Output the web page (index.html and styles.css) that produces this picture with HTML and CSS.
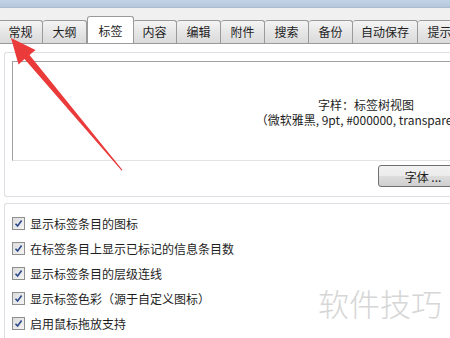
FILE: index.html
```html
<!DOCTYPE html>
<html lang="zh">
<head>
  <meta charset="UTF-8">
  <title>选项</title>
  <link rel="stylesheet" href="styles.css">
</head>
<body>
  <div class="window">
    <div class="titlebar"></div>
    <div class="tabs">
      <div class="tab first">常规</div>
      <div class="tab">大纲</div>
      <div class="tab active">标签</div>
      <div class="tab">内容</div>
      <div class="tab">编辑</div>
      <div class="tab">附件</div>
      <div class="tab">搜索</div>
      <div class="tab">备份</div>
      <div class="tab wide">自动保存</div>
      <div class="tab">提示</div>
    </div>

    <div class="panel">
      <!-- 字体预览 -->
      <div class="group font-group">
        <div class="preview">
          <p>字样：标签树视图</p>
          <p>（微软雅黑, 9pt, #000000, transparent）</p>
        </div>
        <div class="btn-row">
          <button class="btn">字体 ...</button>
        </div>
      </div>

      <!-- 选项 -->
      <div class="group options">
        <label class="check"><span class="box"><svg viewBox="0 0 9 9"><path d="M1.5 4.8 L3.6 7 L7.6 1.6" /></svg></span>显示标签条目的图标</label>
        <label class="check"><span class="box"><svg viewBox="0 0 9 9"><path d="M1.5 4.8 L3.6 7 L7.6 1.6" /></svg></span>在标签条目上显示已标记的信息条目数</label>
        <label class="check"><span class="box"><svg viewBox="0 0 9 9"><path d="M1.5 4.8 L3.6 7 L7.6 1.6" /></svg></span>显示标签条目的层级连线</label>
        <label class="check"><span class="box"><svg viewBox="0 0 9 9"><path d="M1.5 4.8 L3.6 7 L7.6 1.6" /></svg></span>显示标签色彩（源于自定义图标）</label>
        <label class="check"><span class="box"><svg viewBox="0 0 9 9"><path d="M1.5 4.8 L3.6 7 L7.6 1.6" /></svg></span>启用鼠标拖放支持</label>
      </div>
    </div>

    <div class="watermark">软件技巧</div>

    <svg class="arrow" width="450" height="338" viewBox="0 0 450 338">
      <polygon points="11,38 35.5,50 29.5,55 122.5,170 121.5,170.5 24.5,59 18.5,64.5" />
    </svg>
  </div>
</body>
</html>
```

FILE: styles.css
```css
/* 基本 */
body {
  margin: 0;
  padding: 0;
  overflow: hidden;
  font-family: "Noto Sans CJK SC", "Microsoft YaHei", sans-serif;
  font-size: 12px;
  color: #1e1e1e;
  background: #f0f0f0;
}
.window {
  position: relative;
  width: 450px;
  height: 338px;
  overflow: hidden;
}
/* 标题栏 */
.titlebar {
  height: 7px;
  background: linear-gradient(#c3d4e6, #b4c8dc);
  border-bottom: 1px solid #a9bbcd;
}
/* 标签页 */
.tabs {
  display: flex;
  align-items: flex-end;
  height: 35px;
  margin-left: -2px;
  white-space: nowrap;
}
.tab {
  flex: none;
  width: 43px;
  height: 22px;
  line-height: 22px;
  text-align: center;
  background: linear-gradient(#f4f4f4, #e6e6e6 50%, #dadada);
  border: 1px solid #9a9a9a;
  border-bottom: none;
  border-left: none;
  border-radius: 3px 3px 0 0;
}
.tab.first {
  width: 43px;
  border-left: 1px solid #9a9a9a;
}
.tab.active {
  width: 45px;
  height: 26px;
  line-height: 27px;
  background: #fff;
  border-left: 1px solid #9a9a9a;
  margin-right: -1px;
  position: relative;
  z-index: 1;
}
.tab.wide {
  width: 64px;
}
/* 内容 */
.panel {
  background: #fff;
  border-top: 1px solid #9a9a9a;
  padding: 8px 0 0 4px;
  height: 300px;
}
.group {
  border: 1px solid #dcdfe3;
  border-right: none;
  border-radius: 3px 0 0 3px;
  width: 600px;
}
.font-group {
  padding: 8px 0 8px 7px;
  height: 127px;
}
.preview {
  width: 708px;
  height: 100px;
  border: 1px solid #a0a0a0;
  border-right-color: #e3e3e3;
  border-bottom-color: #e3e3e3;
  box-sizing: border-box;
  padding-top: 35px;
  text-align: center;
  line-height: 15px;
}
.preview p {
  margin: 0;
}
.btn-row {
  padding: 4px 0 0 366px;
}
.btn {
  width: 90px;
  height: 22px;
  padding: 0;
  font-family: inherit;
  font-size: 12px;
  color: #1e1e1e;
  border: 1px solid #707070;
  border-radius: 3px;
  background: linear-gradient(#f2f2f2, #ebebeb 50%, #dddddd 51%, #cfcfcf);
}
.options {
  margin-top: 6px;
  padding: 7px 0 0 7px;
  height: 140px;
}
.check {
  display: flex;
  align-items: center;
  height: 25px;
  gap: 5px;
}
.box {
  width: 11px;
  height: 11px;
  border: 1px solid #8e8f8f;
  background: linear-gradient(135deg, #dcdcdc, #f4f4f4);
  display: flex;
  align-items: center;
  justify-content: center;
}
.box svg {
  width: 9px;
  height: 9px;
  fill: none;
  stroke: #2b4a8a;
  stroke-width: 1.6;
}
/* 水印 */
.watermark {
  position: absolute;
  left: 318px;
  top: 280px;
  font-size: 31px;
  font-weight: 300;
  white-space: nowrap;
  color: #d6d6d6;
}
/* 红色箭头 */
.arrow {
  position: absolute;
  left: 0;
  top: 0;
}
.arrow polygon {
  fill: #ea3a3a;
}
```
